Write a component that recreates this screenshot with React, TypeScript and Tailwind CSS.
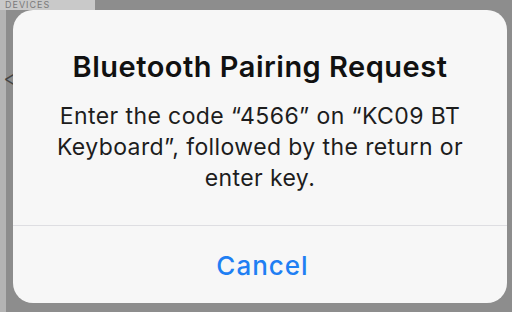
import React from "react";

function BackdropPage() {
  return (
    <div className="absolute inset-0 bg-[#8d8d8d]">
      <div className="h-[10px] w-[95px] bg-[#c9c9c9] overflow-hidden">
        <span className="block pl-[5px] text-[9px] leading-[10px] tracking-[1px] text-[#7a7a7a] font-['Inter',sans-serif]">
          DEVICES
        </span>
      </div>
      <div className="absolute left-0 top-[10px] h-[302px] w-[6px] bg-[#b4b4b4]" />
      <div className="absolute left-[2px] top-[62px] text-[32px] leading-none text-[#444] font-extralight font-['Inter',sans-serif]">
        &lt;
      </div>
    </div>
  );
}

function PairingAlert() {
  return (
    <div className="flex flex-1 flex-col overflow-hidden rounded-[20px] bg-[#f7f7f7] font-['Inter',sans-serif] text-center">
      <div className="flex h-[215px] flex-col items-center px-[28px] pt-[40px]">
        <h2 className="text-[29px] leading-[34px] tracking-[0.5px] font-semibold text-[#111]">
          Bluetooth Pairing Request
        </h2>
        <p className="mt-[17px] text-[23px] leading-[31px] tracking-[0.4px] text-[#1d1d1d]">
          Enter the code “4566” on “KC09 BT Keyboard”, followed by the return or enter key.
        </p>
      </div>
      <div className="h-px bg-[#dedee2]" />
      <button className="flex flex-1 items-center justify-center pt-[1px] pl-[5px] text-[26px] tracking-[1px] font-medium text-[#1f7ff3]">
        Cancel
      </button>
    </div>
  );
}

export default function App() {
  return (
    <div className="relative h-[312px] w-[512px] overflow-hidden">
      <BackdropPage />
      <div className="relative flex h-full pt-[10px] pl-[13px] pr-[5px] pb-[9px]">
        <PairingAlert />
      </div>
    </div>
  );
}
